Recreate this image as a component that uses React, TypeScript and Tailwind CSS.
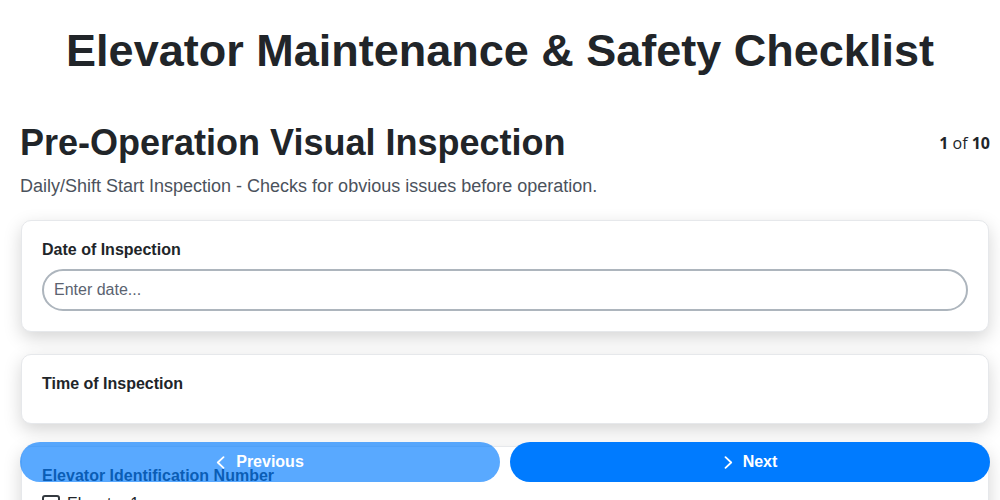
import React from "react";

const Card = ({ children }: { children: React.ReactNode }) => (
  <div className="mx-px mb-[22px] rounded-[10px] border border-[#e6e8eb] bg-white p-5 shadow-[0_6px_18px_rgba(0,0,0,0.17)]">
    {children}
  </div>
);

const ChevLeft = () => (
  <svg width="10" height="13" viewBox="0 0 10 13" fill="none" stroke="currentColor" strokeWidth="1.8" strokeLinecap="round" strokeLinejoin="round">
    <polyline points="7.5,1.2 1.8,6.5 7.5,11.8" />
  </svg>
);

const ChevRight = () => (
  <svg width="10" height="13" viewBox="0 0 10 13" fill="none" stroke="currentColor" strokeWidth="1.8" strokeLinecap="round" strokeLinejoin="round">
    <polyline points="2.5,1.2 8.2,6.5 2.5,11.8" />
  </svg>
);

export default function App() {
  return (
    <div
      className="min-h-screen bg-white pt-6 text-[#212529]"
      style={{ fontFamily: '"Liberation Sans", Arial, sans-serif' }}
    >
      <h1 className="px-5 text-center text-[45px] font-bold leading-[54px] text-[#212529]">
        Elevator Maintenance &amp; Safety Checklist
      </h1>

      <div className="pl-5 pr-[10px]">
        <div className="mt-[43px] flex items-center justify-between">
          <h2 className="text-[36px] font-bold leading-[43px] text-[#212529]">
            Pre-Operation Visual Inspection
          </h2>
          <div
            className="text-[16px] text-[#212529]"
            style={{ fontFamily: '"Open Sans", sans-serif' }}
          >
            <span className="font-bold">1</span> of <span className="font-bold">10</span>
          </div>
        </div>

        <p className="mt-[9px] text-[18px] leading-[27px] text-[#4b525c]">
          Daily/Shift Start Inspection - Checks for obvious issues before operation.
        </p>

        <div className="mt-5">
          <Card>
            <label className="mb-[10px] block text-[16px] font-bold leading-[18px]">
              Date of Inspection
            </label>
            <input
              type="text"
              placeholder="Enter date..."
              className="block h-[42px] w-full rounded-full border-2 border-[#adb5bd] bg-white px-[10px] text-[16px] text-[#212529] outline-none placeholder:text-[#5b6370]"
            />
          </Card>

          <Card>
            <label className="mb-[10px] block text-[16px] font-bold leading-[18px]">
              Time of Inspection
            </label>
          </Card>

          <Card>
            <label className="mb-[9px] block text-[16px] font-bold leading-[18px]">
              Elevator Identification Number
            </label>
            <div className="flex flex-col gap-2">
              {["Elevator 1", "Elevator 2", "Elevator 3", "Elevator 4"].map((e) => (
                <label key={e} className="flex items-center gap-[7px] text-[16px] leading-[20px]">
                  <span className="inline-block h-[18px] w-[18px] rounded-[3px] border-2 border-[#343a40] bg-white" />
                  {e}
                </label>
              ))}
            </div>
          </Card>
        </div>
      </div>

      <div className="fixed bottom-[18px] left-5 right-[10px] flex gap-[10px]">
        <button
          disabled
          className="flex h-10 flex-1 items-center justify-center gap-[10px] rounded-full bg-[#007bff] text-[16px] font-bold text-white opacity-65"
        >
          <ChevLeft />
          Previous
        </button>
        <button className="flex h-10 flex-1 items-center justify-center gap-[10px] rounded-full bg-[#007bff] text-[16px] font-bold text-white">
          <ChevRight />
          Next
        </button>
      </div>
    </div>
  );
}
